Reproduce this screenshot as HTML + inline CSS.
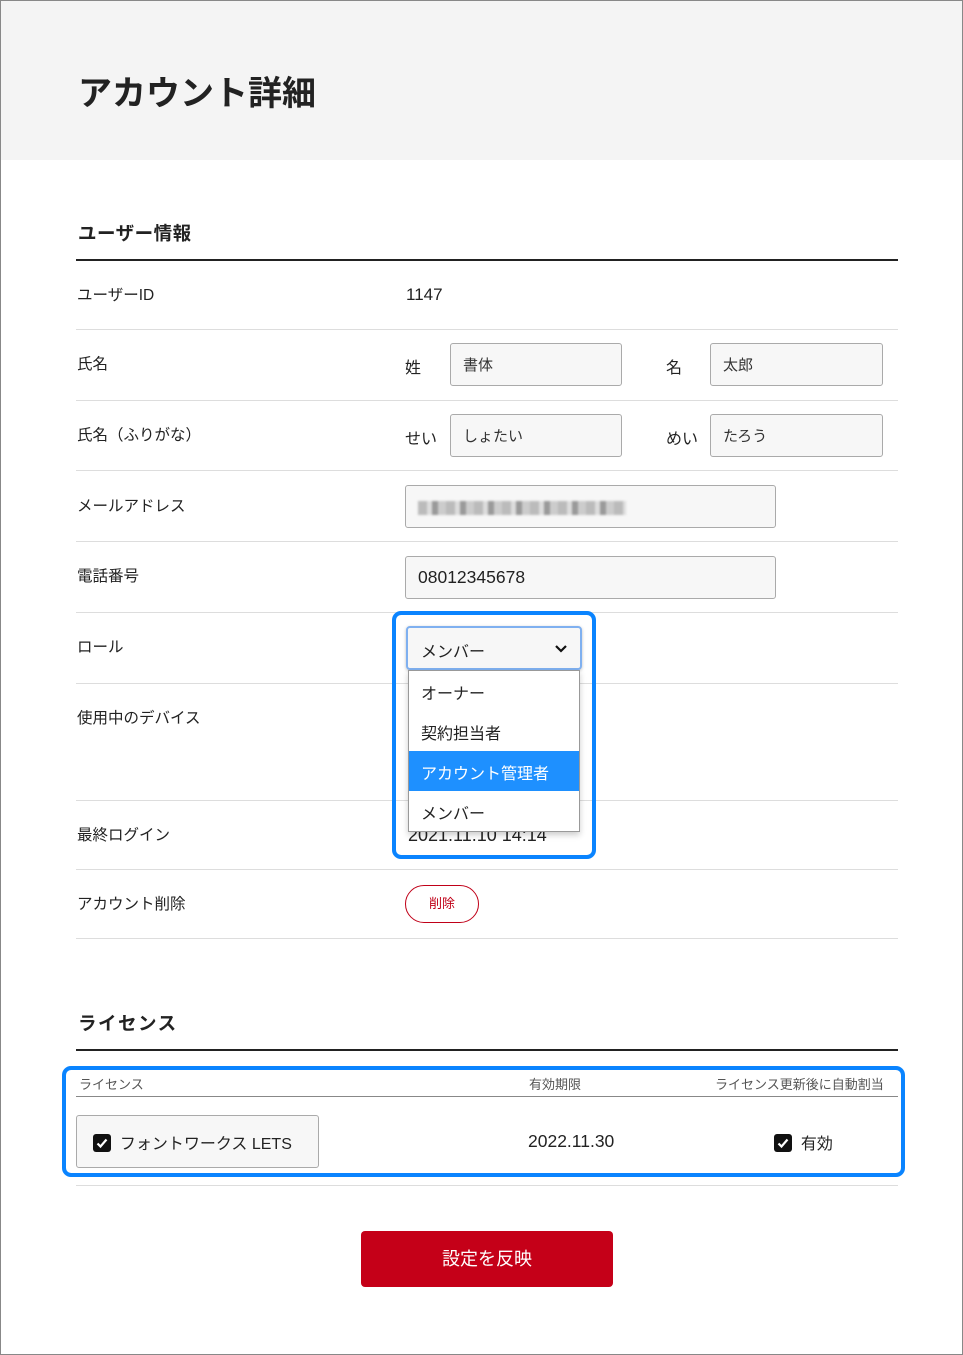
<!DOCTYPE html>
<html><head><meta charset="utf-8"><style>
*{margin:0;padding:0;box-sizing:border-box}
body{width:963px;height:1355px;position:relative;background:#fff;font-family:"Liberation Sans","Noto Sans CJK JP",sans-serif;color:#222;overflow:hidden}
.frame{position:absolute;left:0;top:0;width:963px;height:1355px;border:1px solid #888;}
.hd{position:absolute;left:1px;top:1px;width:961px;height:159px;background:#f4f4f4}
.a{position:absolute;white-space:nowrap}
.line{position:absolute;left:76px;width:822px;height:1px;background:#ddd}
.lbl{position:absolute;left:77px;font-size:15.5px}
.inp{position:absolute;height:43px;border:1px solid #aaa;border-radius:3px;background:#f7f7f7;font-size:15px;padding:10px 12px;color:#333}
.cb{display:inline-block;width:18px;height:18px;background:#111;border-radius:3px;vertical-align:middle;position:relative;top:-2px}
</style></head><body>
<div class="frame"></div>
<div class="hd"></div>
<div class="a" style="left:78px;top:66px;font-size:34px;font-weight:bold;color:#222">アカウント詳細</div>
<div class="a" style="left:78px;top:220px;font-size:18.5px;font-weight:bold;letter-spacing:0.5px">ユーザー情報</div>
<div class="line" style="top:259px;height:2px;background:#222"></div>

<div class="lbl" style="top:283px">ユーザーID</div>
<div class="a" style="left:406px;top:285px;font-size:17px">1147</div>
<div class="line" style="top:329px"></div>

<div class="lbl" style="top:352px">氏名</div>
<div class="a" style="left:405px;top:354px;font-size:16px">姓</div>
<div class="inp" style="left:450px;top:343px;width:172px">書体</div>
<div class="a" style="left:666px;top:354px;font-size:16px">名</div>
<div class="inp" style="left:710px;top:343px;width:173px">太郎</div>
<div class="line" style="top:400px"></div>

<div class="lbl" style="top:423px">氏名（ふりがな）</div>
<div class="a" style="left:405px;top:425px;font-size:16px">せい</div>
<div class="inp" style="left:450px;top:414px;width:172px">しょたい</div>
<div class="a" style="left:666px;top:425px;font-size:16px">めい</div>
<div class="inp" style="left:710px;top:414px;width:173px">たろう</div>
<div class="line" style="top:470px"></div>

<div class="lbl" style="top:494px">メールアドレス</div>
<div class="inp" style="left:405px;top:485px;width:371px"><div style="width:208px;height:14px;margin-top:5px;background:repeating-linear-gradient(90deg,#bbb 0 9px,#ddd 9px 14px,#999 14px 20px,#ccc 20px 28px);filter:blur(1px)"></div></div>
<div class="line" style="top:541px"></div>

<div class="lbl" style="top:564px">電話番号</div>
<div class="inp" style="left:405px;top:556px;width:371px;font-size:17.5px;padding-top:10px;color:#222">08012345678</div>
<div class="line" style="top:612px"></div>

<div class="lbl" style="top:635px">ロール</div>
<div class="line" style="top:683px"></div>
<div class="lbl" style="top:706px">使用中のデバイス</div>
<div class="line" style="top:800px"></div>
<div class="lbl" style="top:823px">最終ログイン</div>
<div class="a" style="left:408px;top:825px;font-size:18px">2021.11.10 14:14</div>
<div class="line" style="top:869px"></div>
<div class="lbl" style="top:892px">アカウント削除</div>
<div class="a" style="left:405px;top:885px;width:74px;height:38px;border:1px solid #c00018;border-radius:19px;color:#c00018;font-size:13px;text-align:center;line-height:36px">削除</div>
<div class="line" style="top:938px"></div>

<div class="a" style="left:406px;top:626px;width:176px;height:44px;border:2px solid #7fb0f0;border-radius:4px;background:#f7f7f7;box-shadow:0 1px 3px rgba(0,0,0,.25);font-size:16px;padding:10px 13px">メンバー
<svg style="position:absolute;right:12px;top:16px" width="14" height="10" viewBox="0 0 14 10"><path d="M2 2l5 5 5-5" fill="none" stroke="#111" stroke-width="2.2"/></svg></div>
<div class="a" style="left:408px;top:670px;width:172px;height:162px;background:#fff;border:1px solid #999;box-shadow:0 3px 6px rgba(0,0,0,.2);font-size:16px">
<div style="height:40px;padding:9px 12px">オーナー</div>
<div style="height:40px;padding:9px 12px">契約担当者</div>
<div style="height:40px;padding:9px 12px;background:#1e90ff;color:#fff">アカウント管理者</div>
<div style="height:40px;padding:9px 12px">メンバー</div>
</div>
<div class="a" style="left:392px;top:611px;width:204px;height:248px;border:4px solid #0a84ff;border-radius:9px"></div>

<div class="a" style="left:78px;top:1010px;font-size:18.5px;font-weight:bold;letter-spacing:1.5px">ライセンス</div>
<div class="line" style="top:1049px;height:2px;background:#222"></div>
<div class="a" style="left:79px;top:1074px;font-size:13px;color:#555">ライセンス</div>
<div class="a" style="left:529px;top:1074px;font-size:13px;color:#555">有効期限</div>
<div class="a" style="left:715px;top:1074px;font-size:13px;color:#555">ライセンス更新後に自動割当</div>
<div class="line" style="top:1096px;background:#888"></div>
<div class="a" style="left:76px;top:1115px;width:243px;height:53px;border:1px solid #aaa;border-radius:3px;background:#f7f7f7;padding:14px 16px;font-size:16px"><span class="cb"><svg width="18" height="18" viewBox="0 0 18 18"><path d="M4.5 9.5l3 3 6-7" fill="none" stroke="#fff" stroke-width="2.2"/></svg></span>&nbsp;&nbsp;フォントワークス LETS</div>
<div class="a" style="left:528px;top:1131px;font-size:17.5px">2022.11.30</div>
<div class="a" style="left:774px;top:1130px;font-size:16px"><span class="cb"><svg width="18" height="18" viewBox="0 0 18 18"><path d="M4.5 9.5l3 3 6-7" fill="none" stroke="#fff" stroke-width="2.2"/></svg></span>&nbsp;&nbsp;有効</div>
<div class="a" style="left:62px;top:1066px;width:843px;height:111px;border:4px solid #0a84ff;border-radius:9px"></div>
<div class="line" style="top:1185px"></div>

<div class="a" style="left:361px;top:1231px;width:252px;height:56px;background:#c50018;border-radius:4px;color:#fff;font-size:18px;text-align:center;line-height:56px">設定を反映</div>
</body></html>
